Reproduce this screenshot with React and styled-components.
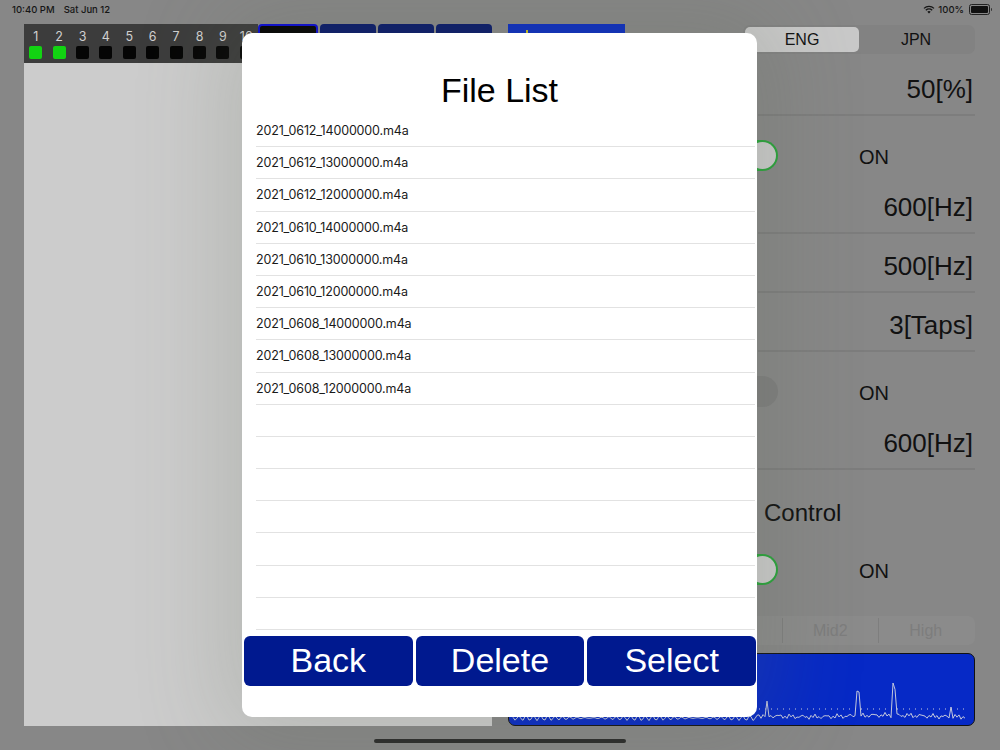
import styled, { createGlobalStyle } from "styled-components";

const GlobalStyle = createGlobalStyle`
  html, body {
    margin: 0;
    padding: 0;
  }
  body {
    font-family: "Liberation Sans", Arial, sans-serif;
  }
`;

const Screen = styled.div`
  position: relative;
  width: 1000px;
  height: 750px;
  overflow: hidden;
  background: #878787;
`;

const StatusBar = styled.div`
  height: 24px;
  display: flex;
  align-items: flex-start;
  justify-content: space-between;
  padding: 4px 10px 0 12px;
  box-sizing: border-box;
  font-family: Inter, "Liberation Sans", sans-serif;
  font-size: 9.5px;
  font-weight: 500;
  color: #161616;
`;

const StatusLeft = styled.div`
  display: flex;
  gap: 9px;
`;

const StatusRight = styled.div`
  display: flex;
  align-items: center;
  gap: 3px;
`;

const Battery = styled.div`
  position: relative;
  width: 17px;
  height: 7px;
  border: 1px solid #222;
  border-radius: 2.5px;
  padding: 1px;
  margin-left: 2px;
  &::before {
    content: "";
    display: block;
    width: 100%;
    height: 100%;
    background: #111;
    border-radius: 1px;
  }
  &::after {
    content: "";
    position: absolute;
    right: -3px;
    top: 2.5px;
    width: 1.5px;
    height: 3px;
    background: #333;
    border-radius: 0 1px 1px 0;
  }
`;

const Main = styled.div`
  display: flex;
  gap: 16px;
  padding-left: 24px;
  height: 702px;
`;

const LeftPanel = styled.div`
  width: 468px;
  display: flex;
  flex-direction: column;
`;

const TopStrip = styled.div`
  display: flex;
  height: 39px;
`;

const ChannelStrip = styled.div`
  width: 234px;
  background: #3c3c3c;
  display: grid;
  grid-template-columns: repeat(10, 1fr);
  grid-template-rows: 20px 19px;
  overflow: hidden;
`;

const ChannelNumber = styled.span`
  font-family: Inter, "Liberation Sans", sans-serif;
  font-size: 12.5px;
  color: #d0d0d0;
  display: flex;
  align-items: flex-end;
  justify-content: center;
`;

const ChannelLed = styled.span`
  justify-self: center;
  align-self: start;
  margin-top: 2px;
  width: 13px;
  height: 13px;
  border-radius: 2px;
  background: ${(p) => (p.$on ? "#12d312" : "#050505")};
`;

const Tabs = styled.div`
  flex: 1;
  display: flex;
  gap: 2px;
`;

const Tab = styled.div`
  flex: 1;
  border-radius: 4px 4px 0 0;
  box-sizing: border-box;
  background: ${(p) => (p.$active ? "#000" : "#07186a")};
  border: ${(p) => (p.$active ? "2px solid #0a0ad4" : "none")};
`;

const CanvasArea = styled.div`
  flex: 1;
  background: #cccccc;
`;

const RightColumn = styled.div`
  width: 467px;
  display: flex;
  flex-direction: column;
`;

const TopRow = styled.div`
  display: flex;
  justify-content: space-between;
  height: 33px;
`;

const BlueIndicator = styled.div`
  position: relative;
  width: 117px;
  height: 40px;
  background: #0a2cc2;
  &::after {
    content: "";
    position: absolute;
    left: 18px;
    top: 6px;
    width: 2px;
    height: 4px;
    background: #c8c020;
  }
`;

const Segmented = styled.div`
  display: flex;
  width: ${(p) => p.$width}px;
  height: 29px;
  margin-top: 1px;
  margin-left: auto;
  background: ${(p) => (p.$faded ? "#8b8b8b" : "#828282")};
  border-radius: 7px;
  padding: 2px;
  box-sizing: border-box;
`;

const SegItem = styled.div`
  flex: 1;
  display: flex;
  align-items: center;
  justify-content: center;
  font-size: 16px;
  color: ${(p) => (p.$faded ? "#7d7d7d" : "#111")};
  background: ${(p) => (p.$selected ? "#c9c9c9" : "transparent")};
  border-left: ${(p) => (p.$divider ? "1px solid #7e7e7e" : "none")};
  border-radius: ${(p) => (p.$divider ? "0" : "5px")};
`;

const ValueRow = styled.div`
  height: 40px;
  padding-top: 17px;
  padding-right: 2px;
  margin-left: 250px;
  border-bottom: 2px solid #7d7d7d;
  display: flex;
  align-items: flex-start;
  justify-content: flex-end;
  font-size: 26px;
  color: #111;
`;

const ToggleRow = styled.div`
  height: 59px;
  display: flex;
  align-items: flex-end;
  padding-left: 219px;
  padding-bottom: 4px;
  box-sizing: border-box;
`;

const Switch = styled.div`
  position: relative;
  width: 51px;
  height: 31px;
  border-radius: 16px;
  background: ${(p) => (p.$on ? "#2aa33b" : "#7e7e7e")};
  &::after {
    content: "";
    position: absolute;
    top: 2px;
    left: ${(p) => (p.$on ? "22px" : "2px")};
    width: 27px;
    height: 27px;
    border-radius: 50%;
    background: #cacaca;
  }
`;

const ToggleLabel = styled.span`
  margin-left: 81px;
  margin-bottom: 2px;
  font-size: 20px;
  color: #111;
`;

const SectionLabel = styled.div`
  height: 60px;
  padding-left: 256px;
  padding-top: 29px;
  box-sizing: border-box;
  font-size: 24px;
  color: #111;
`;

const LowerSegments = styled.div`
  margin-top: 26px;
  margin-bottom: 8px;
`;

const Spectrum = styled.div`
  height: 73px;
  box-sizing: border-box;
  background: #0629c6;
  border: 1.5px solid #111;
  border-radius: 7px;
  overflow: hidden;
  svg {
    display: block;
  }
`;

const HomeIndicator = styled.div`
  position: absolute;
  left: 374px;
  top: 739px;
  width: 252px;
  height: 4px;
  border-radius: 3px;
  background: #2b2b2b;
`;

const Modal = styled.div`
  position: absolute;
  left: 242px;
  top: 33px;
  width: 515px;
  height: 684px;
  background: #fff;
  border-radius: 10px;
  display: flex;
  flex-direction: column;
  box-shadow: 0 0 90px 20px rgba(95, 105, 85, 0.2);
`;

const ModalTitle = styled.h1`
  margin: 0;
  height: 82px;
  display: flex;
  align-items: flex-end;
  justify-content: center;
  padding-bottom: 5px;
  box-sizing: border-box;
  font-size: 34px;
  font-weight: normal;
  color: #000;
`;

const FileList = styled.ul`
  list-style: none;
  margin: 0;
  padding: 0 2px 0 14px;
`;

const FileRow = styled.li`
  height: 32.2px;
  box-sizing: border-box;
  border-bottom: 1px solid #e2e2e2;
  display: flex;
  align-items: center;
  font-family: Inter, "Liberation Sans", sans-serif;
  font-size: 12.5px;
  letter-spacing: -0.15px;
  color: #1a1a1a;
`;

const ButtonBar = styled.div`
  display: grid;
  grid-template-columns: repeat(3, 1fr);
  gap: 3px;
  padding: 6px 1px 0 2px;
`;

const ActionButton = styled.button`
  height: 50px;
  border: none;
  border-radius: 6px;
  background: #00198f;
  color: #fff;
  font-family: "Liberation Sans", Arial, sans-serif;
  font-size: 34px;
  padding: 0 0 2px;
`;

const files = [
  "2021_0612_14000000.m4a",
  "2021_0612_13000000.m4a",
  "2021_0612_12000000.m4a",
  "2021_0610_14000000.m4a",
  "2021_0610_13000000.m4a",
  "2021_0610_12000000.m4a",
  "2021_0608_14000000.m4a",
  "2021_0608_13000000.m4a",
  "2021_0608_12000000.m4a",
];

function spectrumPath() {
  // noisy baseline with a few peaks
  const peaks = { 348: 27, 350: 22, 384: 32, 386: 26, 442: 10, 447: 8, 258: 12 };
  let d = "";
  for (let x = 4; x <= 456; x += 2) {
    const n = Math.sin(x * 1.7) * 1.6 + Math.sin(x * 0.53) * 1.2 + Math.cos(x * 3.1) * 0.8;
    let y = 62 + n;
    if (x < 250) y = 64 + Math.sin(x * 2.3) * 1.5 + Math.cos(x * 0.9) * 1.2;
    if (peaks[x]) y -= peaks[x];
    d += (x === 4 ? "M" : "L") + x + " " + y.toFixed(1) + " ";
  }
  return d;
}

export default function App() {
  const channels = [1, 2, 3, 4, 5, 6, 7, 8, 9, 10];
  return (
    <>
      <GlobalStyle />
      <Screen>
        <StatusBar>
          <StatusLeft>
            <span>10:40 PM</span>
            <span>Sat Jun 12</span>
          </StatusLeft>
          <StatusRight>
            <svg width="12" height="9" viewBox="0 0 12 9">
              <path d="M6 8.6 L4.3 6.8 A2.5 2.5 0 0 1 7.7 6.8 Z" fill="#161616" />
              <path d="M2.8 5.3 A4.6 4.6 0 0 1 9.2 5.3" stroke="#161616" strokeWidth="1.3" fill="none" />
              <path d="M1 3.4 A7.2 7.2 0 0 1 11 3.4" stroke="#161616" strokeWidth="1.3" fill="none" />
            </svg>
            <span>100%</span>
            <Battery />
          </StatusRight>
        </StatusBar>

        <Main>
          <LeftPanel>
            <TopStrip>
              <ChannelStrip>
                {channels.map((c) => (
                  <ChannelNumber key={"n" + c}>{c}</ChannelNumber>
                ))}
                {channels.map((c) => (
                  <ChannelLed key={"l" + c} $on={c <= 2} />
                ))}
              </ChannelStrip>
              <Tabs>
                <Tab $active />
                <Tab />
                <Tab />
                <Tab />
              </Tabs>
            </TopStrip>
            <CanvasArea />
          </LeftPanel>

          <RightColumn>
            <TopRow>
              <BlueIndicator />
              <Segmented $width={232}>
                <SegItem $selected>ENG</SegItem>
                <SegItem>JPN</SegItem>
              </Segmented>
            </TopRow>
            <ValueRow>50[%]</ValueRow>
            <ToggleRow>
              <Switch $on />
              <ToggleLabel>ON</ToggleLabel>
            </ToggleRow>
            <ValueRow>600[Hz]</ValueRow>
            <ValueRow>500[Hz]</ValueRow>
            <ValueRow>3[Taps]</ValueRow>
            <ToggleRow>
              <Switch />
              <ToggleLabel>ON</ToggleLabel>
            </ToggleRow>
            <ValueRow>600[Hz]</ValueRow>
            <SectionLabel>Control</SectionLabel>
            <ToggleRow>
              <Switch $on />
              <ToggleLabel>ON</ToggleLabel>
            </ToggleRow>
            <LowerSegments>
              <Segmented $width={385} $faded>
                <SegItem $faded>Low</SegItem>
                <SegItem $faded $divider>Mid1</SegItem>
                <SegItem $faded $divider>Mid2</SegItem>
                <SegItem $faded $divider>High</SegItem>
              </Segmented>
            </LowerSegments>
            <Spectrum>
              <svg width="464" height="70" viewBox="0 0 464 70">
                <line x1="250" y1="55" x2="456" y2="55" stroke="#c9cde0" strokeWidth="1" strokeDasharray="1 5" />
                <path d={spectrumPath()} stroke="#c4c8dc" strokeWidth="1" fill="none" />
              </svg>
            </Spectrum>
          </RightColumn>
        </Main>

        <HomeIndicator />

        <Modal>
          <ModalTitle>File List</ModalTitle>
          <FileList>
            {files.map((f) => (
              <FileRow key={f}>{f}</FileRow>
            ))}
            {Array.from({ length: 7 }).map((_, i) => (
              <FileRow key={"empty" + i} />
            ))}
          </FileList>
          <ButtonBar>
            <ActionButton>Back</ActionButton>
            <ActionButton>Delete</ActionButton>
            <ActionButton>Select</ActionButton>
          </ButtonBar>
        </Modal>
      </Screen>
    </>
  );
}
